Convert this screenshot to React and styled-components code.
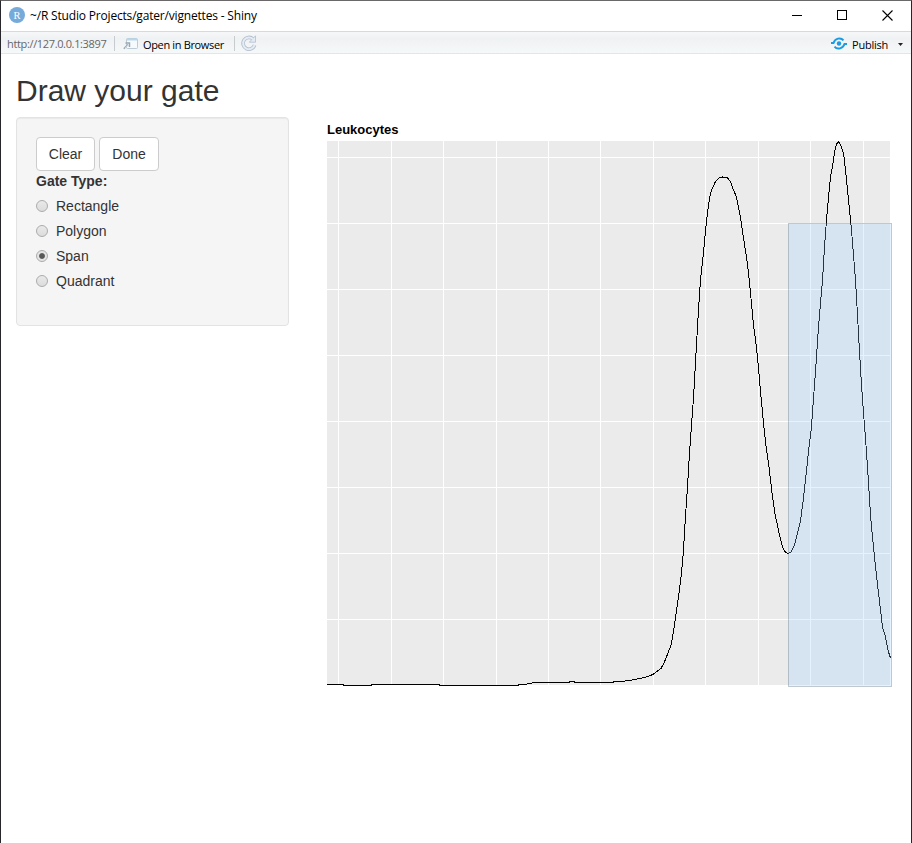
import React, { useState } from "react";
import styled, { createGlobalStyle } from "styled-components";

const GlobalStyle = createGlobalStyle`
  *, *::before, *::after { box-sizing: border-box; }
  body { margin: 0; background: #fff; overflow: hidden; }
`;

const Window = styled.div`
  width: 912px;
  height: 843px;
  display: flex;
  flex-direction: column;
  background: #fff;
  color: #333;
  border: 1px solid #27272b;
  border-top-color: #6b6869;
  border-bottom: 0;
  font-family: "Liberation Sans", Arial, sans-serif;
`;

const TitleBar = styled.header`
  height: 30px;
  flex: none;
  display: flex;
  align-items: center;
  padding: 0 17px 2px 8px;
`;

const Title = styled.span`
  flex: 1;
  padding: 1px 0 0 5px;
  color: #000;
  font: 12px/16px "Open Sans", "Noto Sans", sans-serif;
  letter-spacing: -0.18px;
  white-space: nowrap;
`;

const WindowControls = styled.div`
  display: flex;
  align-items: center;
  gap: 34px;
  margin-right: 1px;
  svg { display: block; }
`;

const ToolBar = styled.nav`
  height: 23px;
  flex: none;
  display: flex;
  align-items: center;
  padding: 1px 8px 0 6px;
  background: linear-gradient(#f6f7f8, #eff2f4 30%, #f6f8f9);
  border-top: 1px solid #d6dadc;
  border-bottom: 1px solid #e3e6e8;
  font: 11px/16px "Open Sans", "Noto Sans", sans-serif;
  color: #000;
`;

const Address = styled.span`
  width: 107px;
  padding-top: 2px;
  color: #666;
  letter-spacing: -0.35px;
`;

const Separator = styled.i`
  width: 1px;
  height: 15px;
  background: #c8cccf;
`;

const ToolButton = styled.button`
  display: flex;
  align-items: center;
  gap: 5px;
  border: 0;
  padding: 3px 0 0;
  margin-left: ${(p) => p.$before || 0}px;
  margin-right: ${(p) => p.$after || 0}px;
  background: none;
  font: inherit;
  color: inherit;
  letter-spacing: ${(p) => p.$tracking || 0}px;
  svg { margin-top: ${(p) => p.$lift ?? -3}px; }
`;

const Spacer = styled.div`
  flex: 1;
`;

const Page = styled.main`
  padding: 20px 15px 0;
`;

const Heading = styled.h2`
  margin: 0 0 10px;
  font-size: 30px;
  font-weight: 400;
  line-height: 33px;
`;

const Columns = styled.div`
  display: flex;
  align-items: flex-start;
  gap: 38px;
`;

const Well = styled.form`
  width: 273px;
  height: 209px;
  flex: none;
  padding: 19px;
  background: #f5f5f5;
  border: 1px solid #e3e3e3;
  border-radius: 4px;
  box-shadow: inset 0 1px 1px rgba(0, 0, 0, 0.05);
  font-size: 14px;
  line-height: 20px;
`;

const ButtonRow = styled.div`
  display: flex;
  gap: 4px;
`;

const Button = styled.button`
  height: 34px;
  width: ${(p) => p.$width}px;
  padding: 0;
  background: #fff;
  border: 1px solid #ccc;
  border-radius: 4px;
  color: #333;
  font: 14px/20px "Liberation Sans", Arial, sans-serif;
`;

const GroupLabel = styled.div`
  font-weight: 700;
`;

const Option = styled.label`
  display: flex;
  align-items: center;
  gap: 8px;
  height: 20px;
  margin-top: 5px;
`;

const Radio = styled.input`
  appearance: none;
  width: 12px;
  height: 12px;
  margin: 0;
  border: 1px solid #acacac;
  border-radius: 50%;
  background: linear-gradient(#e9e9e9, #dcdcdc);
  &:checked {
    background: radial-gradient(circle, #585858 0 2.4px, #e4e4e4 3.4px);
  }
`;

const PlotArea = styled.section`
  padding-top: 5px;
`;

const PlotTitle = styled.h3`
  margin: 0;
  height: 19px;
  color: #000;
  font-size: 13px;
  font-weight: 700;
  line-height: 16px;
`;

const Plot = styled.svg`
  display: block;
  overflow: visible;
`;

const V_GRID = [338, 391, 443, 496, 548, 600, 653, 705, 758, 810, 863, 890];
const H_GRID = [157, 223, 289, 355, 421, 487, 553, 619, 685];

const CURVE = `327,684.5 343,684.5 343,685.5 371,685.5 371,684.5 439,684.5 439,685.5 518,685.5
518,684.5 527,684 535,682.5 569,682.5 570,681.5 574,681.5 575,682.5 613,682.5 614,681.5 623,681.3
630,680.3 635,679.4 641,678.3 647,676.8 653,674.4 657,671.5 661,668.5 664,663 666,658 668,653 671,645
672.5,637 674.5,625 675.5,618 678.5,597 681.5,573 683.5,550 684.5,533 685.5,516 687.5,487 689.5,453
691.5,425 693.5,398 695.5,362 697.5,327 698.5,310 700.5,280 703.5,253 705.5,230 707.5,213 709.5,198
711.5,190 715.5,181.5 719.5,177.7 722.5,177 727.5,177.7 730.5,182 733.5,190 736.5,197 738.5,207
740.5,218 743.5,238 746.5,257 748.5,273 750.5,293 753.5,325 755.5,340 757.5,357 759.5,380 761.5,402
763.5,423 765.5,442 768.5,463 770.5,480 772.5,497 775.5,517 777.5,525 779.5,535 782.5,547 785.5,552.5
788.5,553.6 791.5,551.5 794.5,545 797.5,533 800.5,521 801.5,513 803.5,498 805.5,480 807.5,461 809.5,443
811.5,427 812.5,412 814.5,385 816.5,357 818.5,327 820.5,303 822.5,280 824.5,247 826.5,220 828.5,197
830.5,177 832.5,167 834.5,152 836.5,144 838.5,141.6 840.5,145 843.5,153 845.5,170 847.5,190 849.5,210
851.5,230 853.5,255 855.5,280 857.5,315 859.5,352 861.5,385 863.5,413 865.5,438 867.5,467 869.5,498
870.5,515 872.5,537 874.5,557 876.5,575 878.5,593 880.5,610 882.5,627 885.5,637 888.5,652 890.5,658`;

function DensityPlot() {
  return (
    <Plot width="564" height="546" viewBox="327 141 564 546" shapeRendering="crispEdges">
      <rect x="327" y="141" width="563" height="544" fill="#ebebeb" />
      {V_GRID.map((x) => <rect key={x} x={x} y="141" width="1" height="544" fill="#fff" />)}
      {H_GRID.map((y) => <rect key={y} x="327" y={y} width="563" height="1" fill="#fff" />)}
      <polyline points={CURVE} fill="none" stroke="#000" strokeWidth="1" />
      <rect x="788" y="223" width="104" height="464" fill="#99ccff" fillOpacity="0.25" />
      <rect x="788.5" y="223.5" width="103" height="463" fill="none" stroke="#333" strokeOpacity="0.22" />
    </Plot>
  );
}

const Logo = () => (
  <svg width="16" height="16" viewBox="0 0 16 16">
    <circle cx="8" cy="8" r="8" fill="#75aadb" />
    <text x="8" y="11.5" textAnchor="middle" fontFamily="Liberation Serif, serif" fontSize="10.5" fill="#fff">R</text>
  </svg>
);

const MinimizeIcon = () => (
  <svg width="11" height="11" shapeRendering="crispEdges"><path d="M0 5.5h10" stroke="#000" /></svg>
);
const MaximizeIcon = () => (
  <svg width="11" height="11" shapeRendering="crispEdges"><path d="M.5.5h9v9h-9z" fill="none" stroke="#000" /></svg>
);
const CloseIcon = () => (
  <svg width="11" height="11"><path d="M.5.5l10 10M10.5.5l-10 10" stroke="#000" strokeWidth="1.1" /></svg>
);

const BrowserIcon = () => (
  <svg width="15" height="13" viewBox="0 0 15 13" fill="none">
    <rect x="3.5" y="1.5" width="11" height="10" rx="1" fill="#f7fafc" stroke="#bccbd6" />
    <path d="M4 2.5h10" stroke="#b4d8ee" strokeWidth="2" />
    <path d="M.8 11.8L5 7.5M2.5 6h4v4" stroke="#9ba8b2" strokeWidth="1.5" />
    <path d="M2 11l3.5-3.5" stroke="#e4edf3" strokeWidth=".5" />
  </svg>
);

const RefreshIcon = () => (
  <svg width="16" height="16" viewBox="0 0 16 16" fill="none">
    <path d="M12 4a5.9 5.9 0 1 0 1.6 6" stroke="#b4becb" strokeWidth="3.6" />
    <path d="M14.5.8v6.4H8.3z" fill="#e4edf6" stroke="#b4becb" strokeWidth=".8" />
    <path d="M12 4a5.9 5.9 0 1 0 1.6 6" stroke="#e4edf6" strokeWidth="2" />
  </svg>
);

const PublishIcon = () => (
  <svg width="16" height="13" viewBox="0 0 16 13" fill="none" stroke="#1b9be3" strokeWidth="2">
    <path d="M0 6h2.5C4 1.5 9.5-.2 12.5 3.3" />
    <path d="M16 7h-2.5C12 11.5 6.5 13.2 3.5 9.7" />
    <circle cx="8" cy="6.5" r="2.2" fill="#1b9be3" stroke="none" />
  </svg>
);

const CaretIcon = () => (
  <svg width="5" height="3"><path d="M0 0h5L2.5 3z" fill="#222" /></svg>
);

export default function App() {
  const [gate, setGate] = useState("Span");
  return (
    <>
      <GlobalStyle />
      <Window>
        <TitleBar>
          <Logo />
          <Title>~/R Studio Projects/gater/vignettes - Shiny</Title>
          <WindowControls>
            <MinimizeIcon />
            <MaximizeIcon />
            <CloseIcon />
          </WindowControls>
        </TitleBar>
        <ToolBar>
          <Address>http://127.0.0.1:3897</Address>
          <Separator />
          <ToolButton $before={8} $after={10} $tracking={-0.35}>
            <BrowserIcon />
            Open in Browser
          </ToolButton>
          <Separator />
          <ToolButton $before={6} aria-label="Refresh"><RefreshIcon /></ToolButton>
          <Spacer />
          <ToolButton $tracking={-0.25}><PublishIcon />Publish</ToolButton>
          <ToolButton $before={10} $lift={-1} aria-label="Publish options"><CaretIcon /></ToolButton>
        </ToolBar>
        <Page>
          <Heading>Draw your gate</Heading>
          <Columns>
            <Well>
              <ButtonRow>
                <Button type="button" $width={59}>Clear</Button>
                <Button type="button" $width={60}>Done</Button>
              </ButtonRow>
              <GroupLabel>Gate Type:</GroupLabel>
              {["Rectangle", "Polygon", "Span", "Quadrant"].map((name) => (
                <Option key={name}>
                  <Radio type="radio" name="gate" checked={gate === name} onChange={() => setGate(name)} />
                  {name}
                </Option>
              ))}
            </Well>
            <PlotArea>
              <PlotTitle>Leukocytes</PlotTitle>
              <DensityPlot />
            </PlotArea>
          </Columns>
        </Page>
      </Window>
    </>
  );
}
